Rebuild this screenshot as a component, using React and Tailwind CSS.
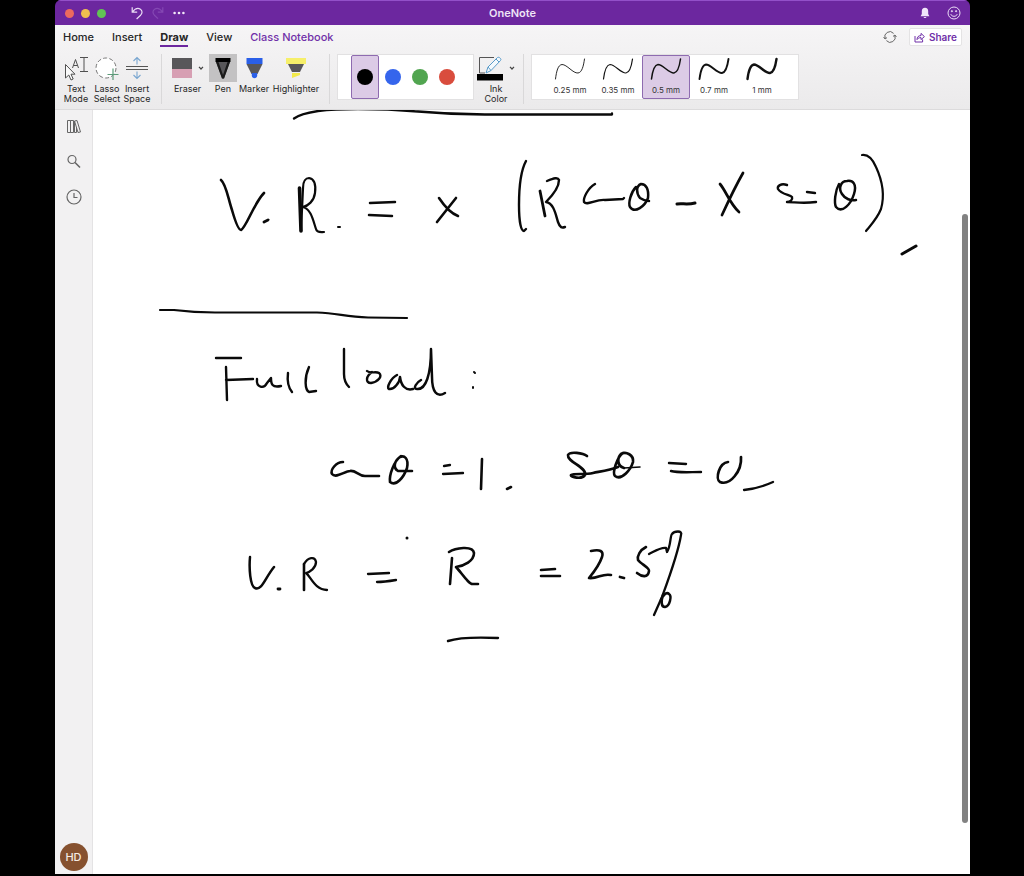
import React from "react";

const INK = [
  // upper rule
  [2.3, "M294 118.5C300 114 308 112.500 318 111C330 109.500 345 109 358 109C375 109 400 110 418 111.500C440 113.500 460 114.500 485 114.500L612 114.500L612 113.500"],
  // V.R. = x
  [2.6, "M221 180C226 184 228 198 232 210C236 224 239 230 241 230C246 228 254 203 264 193"],
  [2.8, "M264 222L268 220"],
  [3.6, "M299.5 188L301 231"],
  [2.2, "M301 231L303 188C303 181 306 178 309 178C315 179 316 185 315 193C314 201 308 206 303 207C311 209 313 220 316 229C317 233 321 232 324 232"],
  [2, "M338 227L340 227"],
  [2.5, "M370 203L395 202M369 215L392 216"],
  [2.6, "M439 198C445 207 450 213 458 216M456 198L437 222"],
  // (R cos - X sin)
  [2.4, "M526 161C520 172 519 187 519 205C519 222 521 231 524 231L526 229"],
  [2.8, "M540 191L545 216"],
  [2.4, "M547 181C554 178 558 177 559 180C559 187 553 195 546 202C554 203 556 216 558 222C560 228 562 228 565 227"],
  [2.4, "M595 184C588 188 583 198 584 202C587 206 596 199 605 200L623 199L624 198"],
  [2.5, "M636 187C631 192 628 203 630 207C635 214 645 206 648 198C649 189 646 184 641 184C636 186 636 193 640 198C643 200 646 201 649 201"],
  [3, "M677 204C682 203 687 205 695 203"],
  [2.7, "M720 184C726 191 730 204 739 212M743 173C735 187 728 202 722 215"],
  [2.4, "M787 185C781 183 777 186 778 189C781 194 790 195 792 197C793 200 790 202 787 202C795 202 802 204 816 202M807 192L815 193"],
  [2.5, "M839 184C835 191 834 203 836 207C842 214 851 204 854 194C857 184 853 180 847 181C841 181 838 188 842 194C845 199 851 201 856 200"],
  [2.2, "M862 155C869 154 873 160 876 167C882 180 885 195 881 209C877 219 870 226 866 231"],
  [3, "M902 254L916 246"],
  // divider
  [2.2, "M160 310L174 310C190 312 200 312.500 215 312.500L317 312.500C338 313 345 317 368 317.500L407 318"],
  // Full load :
  [2.4, "M216 358L241 358M226 367L227 400M226 380L253 379"],
  [2.4, "M257 379C256 388 264 389 267 383L271 378C271 384 272 388 281 386"],
  [2.4, "M288 373C287 381 288 387 292 392M309 367C304 378 305 390 309 392L316 391"],
  [2.4, "M344 349L344 374C344 379 346 384 349 387"],
  [2.4, "M372 372C366 376 365 383 371 383C378 382 383 376 379 373C376 371 370 374 367 371"],
  [2.5, "M397 375C391 378 386 388 389 389C394 390 400 382 400 377C401 385 405 391 413 389"],
  [2.5, "M421 380C417 382 412 389 417 389C426 390 431 374 431 349L432 377C432 392 437 398 445 393"],
  [2, "M474 372L475 373M473 387L473 388"],
  // cos = 1, sin = 0
  [2.6, "M343 462C336 462 330 470 332 474C336 479 345 471 350 471C356 470 358 476 365 476L379 476"],
  [2.6, "M401 456C394 461 389 475 390 482C396 487 404 477 407 468C409 458 404 455 400 457C394 461 393 468 398 471L412 471"],
  [2.3, "M444 466L450 465M443 474L463 473"],
  [2.6, "M482 459L481 489"],
  [2.6, "M507 489L511 487"],
  [2.7, "M587 456C583 453 570 451 568 455C567 462 587 467 585 475C582 480 570 477 571 475C574 473 585 475 593 473C603 471 610 470 618 467"],
  [2.7, "M623 453C617 457 612 473 615 476C622 481 631 469 633 462C634 455 626 451 621 454C617 458 617 466 624 468"],
  [1.6, "M624 468L640 467"],
  [2.4, "M669 463L686 464M671 471C678 473 690 472 701 472"],
  [2.7, "M728 462C719 463 715 479 720 482C730 486 742 471 741 457"],
  [2.3, "M744 490C755 489 762 487 773 482"],
  // stray dot
  [3, "M407 538L407 538"],
  // V.R = R = 2.5%
  [2.5, "M250 557C249 568 250 586 255 588C262 591 265 578 274 567"],
  [2.8, "M278 589L280 589"],
  [2.6, "M304 564L304 590"],
  [2.3, "M304 564C308 557 315 556 316 562C316 568 310 572 306 573C311 577 315 590 327 590"],
  [2.3, "M368 574L389 573M377 582C384 582 390 581 396 580"],
  [2.6, "M452 558L450 584"],
  [2.6, "M449 552C455 548 473 545 474 553C474 561 464 566 456 567C461 572 469 585 473 584L478 584"],
  [2.6, "M541 570L555 569M541 576L560 576"],
  [2.6, "M591 551C600 549 604 551 602 557C600 563 594 572 589 578C598 579 602 573 611 575"],
  [2.8, "M620 577L624 578"],
  [2.6, "M646 547C640 550 637 556 638 560C641 564 650 568 649 571C648 578 642 577 637 573"],
  [2.3, "M649 554C655 551 661 547 666 548L667 552C671 546 670 536 672 534C674 531 683 530 681 535C678 554 666 586 662 597L654 615"],
  [2.5, "M663 595C661 601 661 607 665 607C670 606 672 596 669 594C666 591 662 597 661 600"],
  [2.4, "M448 641C457 638 475 637 498 638"],
];

const STROKE_SIZES = [
  ["0.25 mm", 0.9],
  ["0.35 mm", 1.2],
  ["0.5 mm", 1.5],
  ["0.7 mm", 1.9],
  ["1 mm", 2.4],
];

const focus = "focus-visible:outline-2 focus-visible:outline-purple-500";

function Caret() {
  return (
    <svg width="6" height="6" viewBox="0 0 6 6" fill="none" stroke="#444" strokeWidth="1.2" aria-hidden="true">
      <path d="M1 1.8L3 4L5 1.8" />
    </svg>
  );
}

function Tool({ width, label, caret, active, children }) {
  return (
    <button className={`flex shrink-0 flex-col items-center gap-0.5 ${width} ${focus}`} aria-pressed={!!active}>
      <span className={`flex h-7 items-center justify-center gap-1.5 ${active ? "w-7 bg-[#c3c2c3]" : ""}`}>
        {children}
        {caret && <Caret />}
      </span>
      <span className="text-[9px] leading-[10px] whitespace-pre-line text-center">{label}</span>
    </button>
  );
}

function Divider() {
  return <div className="h-[50px] w-px shrink-0 bg-[#d9d8d9]" />;
}

function TitleBar() {
  return (
    <header className="grid h-[25px] shrink-0 grid-cols-[1fr_auto_1fr] items-center border-t border-[#9350c9] bg-[#6c279f] px-[9px] text-white">
      <div className="flex items-center pl-px">
        <div className="flex gap-[7px]">
          <button aria-label="Close" className="size-[9px] rounded-full bg-[#ec6a5e]" />
          <button aria-label="Minimize" className="size-[9px] rounded-full bg-[#f0bf4f]" />
          <button aria-label="Zoom" className="size-[9px] rounded-full bg-[#61c354]" />
        </div>
        <div className="ml-6 flex items-center gap-[7px]">
          <button aria-label="Undo">
            <svg width="14" height="14" viewBox="0 0 14 14" fill="none" stroke="#eadcf5" strokeWidth="1.2">
              <path d="M2.2 1.2V6.2H7.2M2.4 6C5 2.6 8 1.6 10.4 3.2C12.8 5 12.2 7.6 10.6 9.2L6.6 13" />
            </svg>
          </button>
          <button aria-label="Redo" disabled>
            <svg width="14" height="14" viewBox="0 0 14 14" fill="none" stroke="#8448b3" strokeWidth="1.2">
              <path d="M11.8 1.2V6.2H6.8M11.6 6C9 2.6 6 1.6 3.6 3.2C1.2 5 1.8 7.6 3.4 9.2L7 12.6" />
            </svg>
          </button>
          <button aria-label="More">
            <svg width="14" height="14" viewBox="0 0 14 14" fill="#f1e8f8">
              <circle cx="2.6" cy="7" r="1.3" /><circle cx="7" cy="7" r="1.3" /><circle cx="11.4" cy="7" r="1.3" />
            </svg>
          </button>
        </div>
      </div>
      <h1 className="text-[11px] leading-4 font-semibold text-[#eee3f6]">OneNote</h1>
      <div className="flex items-center justify-end gap-4">
        <button aria-label="Notifications">
          <svg width="12" height="14" viewBox="0 0 12 14" fill="#f1e4fa">
            <path d="M6 1.8C8.2 1.8 9.2 3.4 9.200 5.2V8L10.400 10.2H1.600L2.800 8V5.200C2.800 3.400 3.800 1.800 6 1.800ZM4.600 11H7.400C7.200 12.4 4.800 12.4 4.600 11Z" />
          </svg>
        </button>
        <button aria-label="Feedback">
          <svg width="14" height="14" viewBox="0 0 14 14" fill="none" stroke="#eadcf5">
            <circle cx="7" cy="7" r="6" />
            <path d="M3.8 8.2C4.6 11 9.4 11 10.2 8.2" />
            <circle cx="4.9" cy="5.2" r="0.6" fill="#eadcf5" /><circle cx="9.1" cy="5.2" r="0.6" fill="#eadcf5" />
          </svg>
        </button>
      </div>
    </header>
  );
}

function Tab({ children, active, accent }) {
  return (
    <a
      href="#"
      aria-current={active ? "page" : undefined}
      className={`border-y-2 border-t-transparent text-[11px] leading-4 whitespace-nowrap ${
        active ? "border-b-[#6c279f] font-bold" : "border-b-transparent font-medium"
      } ${accent ? "text-[#7030a8]" : ""}`}
    >
      {children}
    </a>
  );
}

function Tabs() {
  return (
    <div className="flex h-6 items-center justify-between pr-2 pl-2">
      <nav className="flex gap-[18px]">
        <Tab>Home</Tab>
        <Tab>Insert</Tab>
        <Tab active>Draw</Tab>
        <Tab>View</Tab>
        <Tab accent>Class Notebook</Tab>
      </nav>
      <div className="flex items-center gap-3">
        <button aria-label="Sync">
          <svg width="14" height="14" viewBox="0 0 14 14" fill="none" stroke="#666">
            <path d="M2.2 8.6A5 5 0 0 1 10.6 3.4M11.8 5.4A5 5 0 0 1 3.4 10.6M0.6 7L2 9L4 7.6M13.4 7L12 5L10 6.4" />
          </svg>
        </button>
        <button className="flex h-[18px] items-center gap-1 rounded-xs border border-[#e4e3e4] bg-white px-1 text-[10px] font-semibold text-[#7030a8]">
          <svg width="11" height="11" viewBox="0 0 11 11" fill="none" stroke="#7030a8">
            <path d="M1 4V10H8.6V7.4M3 7.6C3 5 4.4 3.6 7 3.6V1.4L10.4 4.6L7 7.6V5.6C5.2 5.6 4 6.2 3 7.6Z" />
          </svg>
          Share
        </button>
      </div>
    </div>
  );
}

function Ribbon() {
  return (
    <div className="flex items-start overflow-hidden pt-[5px] pb-[5px] pl-[5px]">
      <Tool width="w-8" label={"Text\nMode"}>
        <svg width="24" height="25" viewBox="0 0 24 25" fill="none" stroke="#505050">
          <path d="M1.5 8.500V22L4.8 19L7 24L9.2 23L7 18.200H11Z" fill="#fafafa" />
          <path d="M8.500 12L11.500 3.500L14.500 12M9.500 9.500H13.500" />
          <path d="M16 1.500H24M20 1.500V15.500M16 15.500H24" />
        </svg>
      </Tool>
      <Tool width="w-[30px]" label={"Lasso\nSelect"}>
        <svg width="24" height="25" viewBox="0 0 24 25" fill="none">
          <circle cx="11" cy="12" r="10" fill="#fff" stroke="#777" strokeDasharray="4 2.280" />
          <path d="M18 12.500V24M12.500 18.500H23.500" stroke="#5b9a78" strokeWidth="1.2" />
        </svg>
      </Tool>
      <Tool width="w-[30px]" label={"Insert\nSpace"}>
        <svg width="22" height="24" viewBox="0 0 22 24" fill="none">
          <path d="M0 10.500H22M0 13.500H22" stroke="#555" />
          <path d="M11 1.500V8.500M7.500 5L11 1.500L14.500 5M11 15.500V22.500M7.500 19L11 22.500L14.500 19" stroke="#79a6d0" strokeWidth="1.1" />
        </svg>
      </Tool>
      <div className="w-[9px] shrink-0" />
      <Divider />
      <div className="w-[7px] shrink-0" />
      <Tool width="w-[37px]" label="Eraser" caret>
        <svg width="20" height="22" viewBox="0 0 20 22">
          <rect x="0" y="1" width="20" height="12" fill="#58575a" />
          <rect x="0" y="12" width="20" height="9" fill="#d79fb3" />
        </svg>
      </Tool>
      <div className="w-[3px] shrink-0" />
      <Tool width="w-7" label="Pen" active>
        <svg width="16" height="22" viewBox="0 0 16 22">
          <path d="M1 5H15L9 21.500H7Z" fill="#58575a" />
          <path d="M1 5H3.500L8 18L12.500 5H15L9 21.500H7Z" fill="#1a1a1a" />
          <rect x="0.500" y="1" width="15" height="4" fill="#000" />
        </svg>
      </Tool>
      <div className="w-0.5 shrink-0" />
      <Tool width="w-[30px]" label="Marker">
        <svg width="17" height="22" viewBox="0 0 17 22">
          <path d="M0.500 7H16.500L11.500 17H5.500Z" fill="#58575a" />
          <rect x="0.500" y="1" width="16" height="6" fill="#2a5fe8" />
          <path d="M5.800 16H11.200V18.500C11.200 22.200 5.800 22.200 5.800 18.500Z" fill="#2a5fe8" />
        </svg>
      </Tool>
      <div className="w-1 shrink-0" />
      <Tool width="w-[46px]" label="Highlighter">
        <svg width="20" height="22" viewBox="0 0 20 22">
          <path d="M2 7H18L14 15H6Z" fill="#58575a" />
          <rect x="0" y="1" width="20" height="6" fill="#f6ef6a" />
          <path d="M6 16H14V18L6 21Z" fill="#f2ea4c" />
        </svg>
      </Tool>
      <div className="w-2.5 shrink-0" />
      <Divider />
      <div className="w-[7px] shrink-0" />
      <div className="flex h-[46px] w-[137px] shrink-0 items-center border border-[#e2e1e2] bg-white pl-[13px]">
        <button aria-label="Black" aria-pressed="true" className="flex h-11 w-7 items-center justify-center rounded-xs border border-[#8e6bb0] bg-[#dccbe6]">
          <span className="size-4 rounded-full bg-black" />
        </button>
        <button aria-label="Blue" className="flex h-11 w-[27px] items-center justify-center">
          <span className="size-4 rounded-full bg-[#3565ec]" />
        </button>
        <button aria-label="Green" className="flex h-11 w-[27px] items-center justify-center">
          <span className="size-4 rounded-full bg-[#51a550]" />
        </button>
        <button aria-label="Red" className="flex h-11 w-[27px] items-center justify-center">
          <span className="size-4 rounded-full bg-[#d94c3d]" />
        </button>
      </div>
      <div className="w-[3px] shrink-0" />
      <Tool width="w-[38px]" label={"Ink\nColor"} caret>
        <svg width="26" height="26" viewBox="0 0 26 26" fill="none">
          <path d="M17 2.500H2.500V18H8" stroke="#555" />
          <path d="M9 18L11 12L20.500 2.500C22 1.500 25 4 23.500 5.500L14 15.500ZM11 12L14 15.500M19 4L22 7" fill="#f4f9fd" stroke="#5a9bc9" />
          <rect x="0" y="19" width="26" height="6.500" fill="#000" />
        </svg>
      </Tool>
      <div className="w-2 shrink-0" />
      <Divider />
      <div className="w-[7px] shrink-0" />
      <div className="flex h-[46px] w-[268px] shrink-0 items-center border border-[#e2e1e2] bg-white pl-[14px]">
        {STROKE_SIZES.map(([label, width], i) => (
          <button
            key={label}
            aria-pressed={i === 2}
            className={`flex h-11 w-12 shrink-0 flex-col items-center justify-between rounded-xs border pt-px pb-[3px] ${
              i === 2 ? "border-[#8e6bb0] bg-[#dccbe6]" : "border-transparent"
            }`}
          >
            <svg width="32" height="24" viewBox="0 0 32 24" fill="none" stroke="#111" strokeWidth={width} strokeLinecap="round">
              <path d="M1.500 22C2.500 14 4 8 8 7.500C13 7.500 19 16.500 24 16C28 15.500 29.500 9 30.500 2" />
            </svg>
            <span className="text-[8px] leading-[10px] whitespace-nowrap text-[#333]">{label}</span>
          </button>
        ))}
      </div>
    </div>
  );
}

function Sidebar() {
  return (
    <aside className="flex w-[38px] shrink-0 flex-col items-center border-r border-[#e4e3e4] bg-[#f2f1f2] pt-[9px] pb-[3px]">
      <div className="flex flex-col gap-5">
        <button aria-label="Notebooks">
          <svg width="16" height="15" viewBox="0 0 16 15" fill="none" stroke="#666">
            <path d="M1.500 1.500H4.500V13.500H1.500ZM4.500 1.500H7.500V13.500H4.500ZM8.500 2L11 1.500L14.500 13L12 13.500ZM8.500 2V13.500H10.500V8" />
          </svg>
        </button>
        <button aria-label="Search">
          <svg width="16" height="15" viewBox="0 0 16 15" fill="none" stroke="#666" strokeWidth="1.200">
            <circle cx="6" cy="5.500" r="4" />
            <path d="M9 8.500L14 13.500" strokeWidth="1.600" />
          </svg>
        </button>
        <button aria-label="Recent">
          <svg width="16" height="16" viewBox="0 0 16 16" fill="none" stroke="#666" strokeWidth="1.200">
            <circle cx="8" cy="8" r="7" />
            <path d="M8 4V8.500H11.500" />
          </svg>
        </button>
      </div>
      <button aria-label="Account HD" className="mt-auto size-7 rounded-full bg-[#86512f] text-[11px] font-medium text-[#f6ebe3]">
        HD
      </button>
    </aside>
  );
}

function Page() {
  return (
    <main className="relative min-w-0 flex-1 bg-white">
      <svg className="block h-auto w-full" viewBox="93 110 877 764" fill="none" stroke="#0a0a0a" strokeLinecap="round" strokeLinejoin="round" role="img" aria-label="Handwritten notes">
        {INK.map(([width, d], i) => (
          <path key={i} d={d} strokeWidth={width} />
        ))}
      </svg>
      <div className="absolute top-[104px] right-0.5 bottom-[51px] w-1.5 rounded-full bg-[#828282]" />
    </main>
  );
}

export default function App() {
  return (
    <div className="flex min-h-screen flex-col bg-black pr-[54px] pb-0.5 pl-[55px] font-['Inter','Liberation_Sans',sans-serif] text-[#262626]">
      <div className="flex flex-1 flex-col overflow-hidden rounded-t-md">
        <TitleBar />
        <div className="border-b border-[#dcdbdc] bg-linear-to-b from-[#f6f5f6] to-[#ebeaeb]">
          <Tabs />
          <Ribbon />
        </div>
        <div className="flex flex-1">
          <Sidebar />
          <Page />
        </div>
      </div>
    </div>
  );
}
